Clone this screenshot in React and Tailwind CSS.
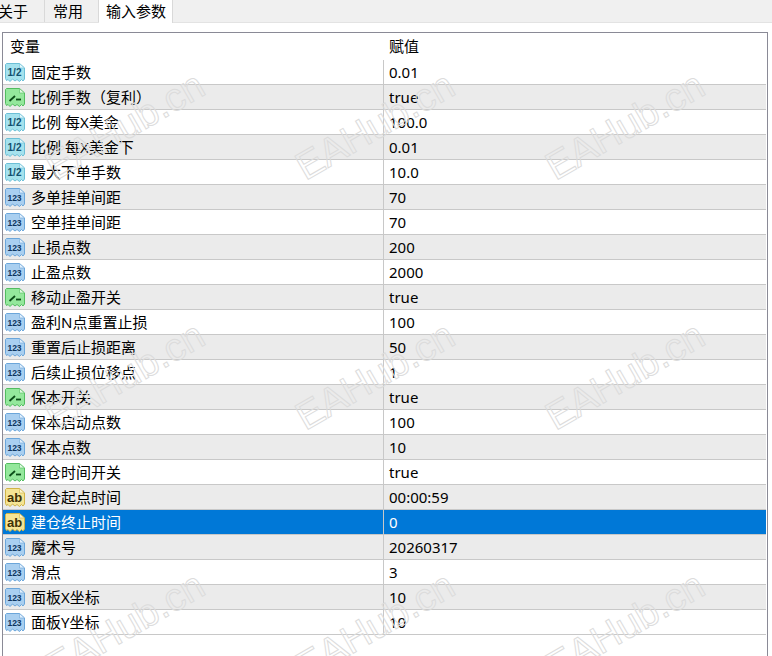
const rows = [
  ["d", "固定手数", "0.01"],
  ["b", "比例手数（复利）", "true"],
  ["d", "比例 每X美金", "100.0"],
  ["d", "比例 每X美金下", "0.01"],
  ["d", "最大下单手数", "10.0"],
  ["i", "多单挂单间距", "70"],
  ["i", "空单挂单间距", "70"],
  ["i", "止损点数", "200"],
  ["i", "止盈点数", "2000"],
  ["b", "移动止盈开关", "true"],
  ["i", "盈利N点重置止损", "100"],
  ["i", "重置后止损距离", "50"],
  ["i", "后续止损位移点", "1"],
  ["b", "保本开关", "true"],
  ["i", "保本启动点数", "100"],
  ["i", "保本点数", "10"],
  ["b", "建仓时间开关", "true"],
  ["s", "建仓起点时间", "00:00:59"],
  ["s", "建仓终止时间", "0"],
  ["i", "魔术号", "20260317"],
  ["i", "滑点", "3"],
  ["i", "面板X坐标", "10"],
  ["i", "面板Y坐标", "10"],
];

const iconStyles = {
  d: { fill: "#a5e2ee", edge: "#6cbfd6", corner: "#e4f7fb", label: "1/2", ink: "#12506e" },
  b: { fill: "#94e89c", edge: "#52bc60", corner: "#e0f9e2", label: "", ink: "#0b4d18" },
  i: { fill: "#a9cff0", edge: "#6ba6da", corner: "#e3f0fb", label: "123", ink: "#0f3560" },
  s: { fill: "#f5e494", edge: "#cfb347", corner: "#fdf6d2", label: "ab", ink: "#3f3206" },
};

function TypeIcon({ type }) {
  const c = iconStyles[type];
  return (
    <svg width="22" height="21" viewBox="0 0 22 21" className="shrink-0">
      <path
        d="M2.5 1.5 H15.5 L20.5 6 V17 L19 19 L17.5 17.5 L15.5 19.5 L13 17.5 L11 19 L8.5 17 L6 19.5 L4 17.5 L2.5 18.5 L1.5 16.5 V2.5 Z"
        fill={c.fill}
        stroke={c.edge}
        strokeWidth="1"
      />
      <path d="M15.5 1.5 V6 H20.5 Z" fill={c.corner} stroke={c.edge} strokeWidth="0.6" />
      {type === "b" ? (
        <>
          <path d="M5.5 14 L11 9" fill="none" stroke={c.ink} strokeWidth="1.8" />
          <path d="M12 12.5 H17" fill="none" stroke={c.ink} strokeWidth="1.8" />
        </>
      ) : (
        <text
          x="10.5"
          y={type === "s" ? 15 : 14}
          textAnchor="middle"
          fontSize={type === "s" ? 13 : type === "i" ? 8.5 : 10}
          fontWeight="700"
          fontFamily="'Liberation Sans', sans-serif"
          fill={c.ink}
        >
          {c.label}
        </text>
      )}
    </svg>
  );
}

function Row({ row, index }) {
  const selected = row[1] === "建仓终止时间";
  const bg = selected ? "bg-[#0078d7] text-white" : index % 2 === 1 ? "bg-[#ebebeb]" : "bg-white";
  return (
    <div className={`flex h-[25px] border-b border-[#c8c8c8] ${bg}`}>
      <div className="flex w-[381px] items-center border-r border-[#c8c8c8] pl-[1px]">
        <TypeIcon type={row[0]} />
        <span className="ml-[5px]">{row[1]}</span>
      </div>
      <div className="flex items-center pl-[5px]">{row[2]}</div>
    </div>
  );
}

export default function App() {
  return (
    <div className="relative h-[656px] w-[772px] overflow-hidden bg-white font-['Noto_Sans','Noto_Sans_CJK_SC',sans-serif] text-[15px] text-black">
      {/* tabs */}
      <div className="flex h-[23px] border-b border-[#e3e3e3] bg-[#f0f0f0]">
        <div className="flex w-[45px] items-center border-r border-[#d9d9d9] -indent-[2px]">关于</div>
        <div className="flex w-[54px] items-center border-r border-[#d9d9d9] pl-[8px]">常用</div>
        <div className="-mb-px flex w-[74px] items-center border-r border-[#d9d9d9] bg-white pl-[7px]">输入参数</div>
      </div>

      {/* table */}
      <div className="ml-[2px] mt-[9px] h-[630px] w-[766px] border border-b-0 border-[#8a8a96] pr-px">
        <div className="flex h-[27px] items-center">
          <div className="w-[381px] pl-[7px]">变量</div>
          <div className="pl-[5px]">赋值</div>
        </div>
        {rows.map((row, i) => (
          <Row key={row[1]} row={row} index={i} />
        ))}
      </div>

      {/* watermark */}
      <div className="pointer-events-none absolute inset-0 grid grid-cols-[repeat(3,250px)] grid-rows-[repeat(3,250px)] place-items-center">
        {Array.from({ length: 9 }).map((_, i) => (
          <span
            key={i}
            className="-rotate-[30deg] whitespace-nowrap font-['Liberation_Sans',sans-serif] text-[39px] leading-none text-transparent [-webkit-text-stroke:1px_#dcdcdc]"
          >
            EAHub.cn
          </span>
        ))}
      </div>
    </div>
  );
}
